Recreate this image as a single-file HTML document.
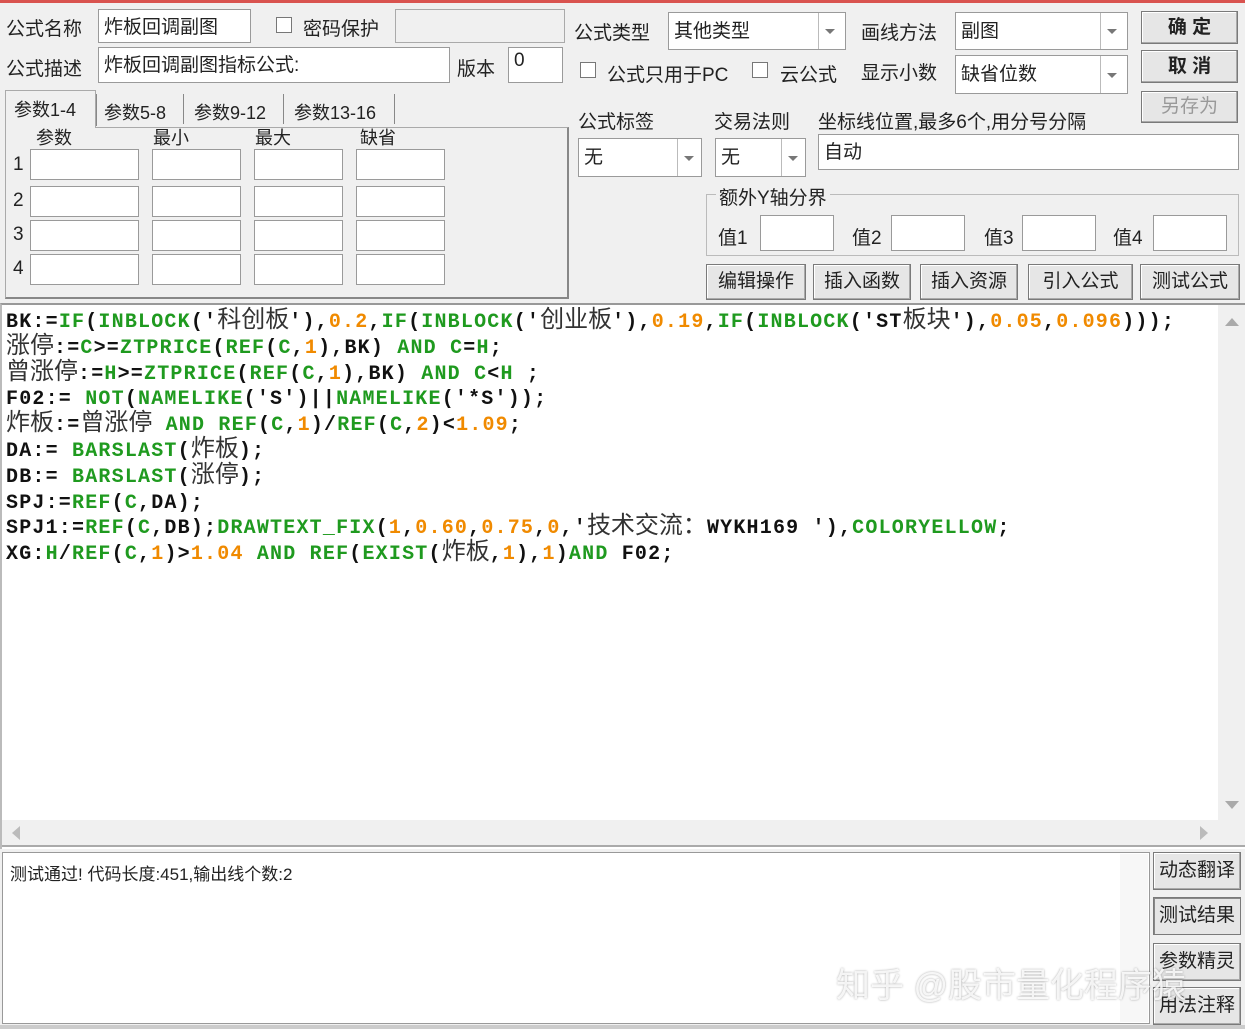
<!DOCTYPE html>
<html><head><meta charset="utf-8">
<style>
*{margin:0;padding:0;box-sizing:border-box}
body{width:1245px;height:1029px;background:#f0f0f0;position:relative;overflow:hidden;font-family:"Liberation Sans","Noto Sans CJK SC",sans-serif;font-size:19px;color:#222}
.a{position:absolute}
.lbl{position:absolute;white-space:nowrap;font-size:19px}
.in{position:absolute;background:#fff;border:1px solid #9a9a9a;padding:2px 5px;font-size:19px;white-space:nowrap}
.dis{position:absolute;background:#f0f0f0;border:1px solid #aaa}
.cb{position:absolute;width:16px;height:16px;border:1px solid #777;background:#fff}
.sel{position:absolute;background:#fff;border:1px solid #9a9a9a;font-size:19px;padding:3px 5px}
.sel .ar{position:absolute;right:0;top:0;bottom:0;width:22px;border-left:1px solid #bbb}
.sel .ar:after{content:"";position:absolute;left:6px;top:50%;margin-top:-2px;border-left:5px solid transparent;border-right:5px solid transparent;border-top:5px solid #777}
.btn{position:absolute;background:#e6e6e6;border:1px solid #7a7a7a;box-shadow:inset -1px -1px 0 #aaa,inset 1px 1px 0 #fff;text-align:center;font-size:19px;white-space:nowrap}
.code{position:absolute;left:6px;top:310px;font-family:"Liberation Mono",monospace;font-weight:bold;font-size:20px;letter-spacing:1.2px;line-height:25.8px;white-space:pre;color:#111}
.code .c{font-family:"Noto Sans CJK SC",sans-serif;font-weight:normal;font-size:24px;letter-spacing:0;color:#333;line-height:0}
.g{color:#1f9a1f}.o{color:#f08a00}
.tab{position:absolute;white-space:nowrap;font-size:18px}
</style></head><body>
<div class="a" style="left:0;top:0;width:1245px;height:3px;background:#d9534f"></div>

<div class="lbl" style="left:6px;top:14px">公式名称</div>
<div class="in" style="left:98px;top:9px;width:153px;height:34px">炸板回调副图</div>
<div class="cb" style="left:276px;top:17px"></div>
<div class="lbl" style="left:303px;top:14px">密码保护</div>
<div class="dis" style="left:395px;top:9px;width:170px;height:34px"></div>

<div class="lbl" style="left:6px;top:54px">公式描述</div>
<div class="in" style="left:98px;top:47px;width:352px;height:36px">炸板回调副图指标公式:</div>
<div class="lbl" style="left:457px;top:54px">版本</div>
<div class="in" style="left:508px;top:47px;width:55px;height:36px">0</div>

<!-- tabs -->
<div class="a" style="left:5px;top:90px;width:91px;height:38px;border:1px solid #aaa;border-bottom:none;background:#f0f0f0;z-index:2"></div>
<div class="tab" style="left:14px;top:96px;z-index:3">参数1-4</div>
<div class="tab" style="left:104px;top:99px">参数5-8</div>
<div class="a" style="left:183px;top:94px;width:1px;height:30px;background:#888"></div>
<div class="tab" style="left:194px;top:99px">参数9-12</div>
<div class="a" style="left:283px;top:94px;width:1px;height:30px;background:#888"></div>
<div class="tab" style="left:294px;top:99px">参数13-16</div>
<div class="a" style="left:394px;top:94px;width:1px;height:30px;background:#888"></div>
<div class="a" style="left:96px;top:94px;width:1px;height:32px;background:#888"></div>
<div class="a" style="left:5px;top:127px;width:564px;height:172px;border:1px solid #aaa;border-right:2px solid #888;border-bottom:2px solid #888"></div>
<div class="lbl" style="left:36px;top:124px;font-size:18px">参数</div>
<div class="lbl" style="left:153px;top:124px;font-size:18px">最小</div>
<div class="lbl" style="left:255px;top:124px;font-size:18px">最大</div>
<div class="lbl" style="left:360px;top:124px;font-size:18px">缺省</div>
<div class="lbl" style="left:13px;top:154px">1</div>
<div class="lbl" style="left:13px;top:190px">2</div>
<div class="lbl" style="left:13px;top:224px">3</div>
<div class="lbl" style="left:13px;top:258px">4</div>
<div class="in" style="left:30px;top:149px;width:109px;height:31px"></div>
<div class="in" style="left:152px;top:149px;width:89px;height:31px"></div>
<div class="in" style="left:254px;top:149px;width:89px;height:31px"></div>
<div class="in" style="left:356px;top:149px;width:89px;height:31px"></div>
<div class="in" style="left:30px;top:186px;width:109px;height:31px"></div>
<div class="in" style="left:152px;top:186px;width:89px;height:31px"></div>
<div class="in" style="left:254px;top:186px;width:89px;height:31px"></div>
<div class="in" style="left:356px;top:186px;width:89px;height:31px"></div>
<div class="in" style="left:30px;top:220px;width:109px;height:31px"></div>
<div class="in" style="left:152px;top:220px;width:89px;height:31px"></div>
<div class="in" style="left:254px;top:220px;width:89px;height:31px"></div>
<div class="in" style="left:356px;top:220px;width:89px;height:31px"></div>
<div class="in" style="left:30px;top:254px;width:109px;height:31px"></div>
<div class="in" style="left:152px;top:254px;width:89px;height:31px"></div>
<div class="in" style="left:254px;top:254px;width:89px;height:31px"></div>
<div class="in" style="left:356px;top:254px;width:89px;height:31px"></div>

<!-- right side -->
<div class="lbl" style="left:574px;top:18px">公式类型</div>
<div class="sel" style="left:668px;top:12px;width:178px;height:38px">其他类型<div class="ar" style="width:27px"></div></div>
<div class="lbl" style="left:861px;top:18px">画线方法</div>
<div class="sel" style="left:955px;top:12px;width:173px;height:38px">副图<div class="ar" style="width:27px"></div></div>
<div class="cb" style="left:580px;top:62px"></div>
<div class="lbl" style="left:607px;top:60px">公式只用于PC</div>
<div class="cb" style="left:752px;top:62px"></div>
<div class="lbl" style="left:780px;top:60px">云公式</div>
<div class="lbl" style="left:861px;top:58px">显示小数</div>
<div class="sel" style="left:955px;top:55px;width:173px;height:39px">缺省位数<div class="ar" style="width:27px"></div></div>
<div class="btn" style="left:1141px;top:11px;width:97px;height:33px;line-height:31px;font-weight:bold">确 定</div>
<div class="btn" style="left:1141px;top:50px;width:97px;height:33px;line-height:31px;font-weight:bold">取 消</div>
<div class="btn" style="left:1141px;top:91px;width:97px;height:32px;line-height:30px;color:#999">另存为</div>

<div class="lbl" style="left:578px;top:107px">公式标签</div>
<div class="lbl" style="left:714px;top:107px">交易法则</div>
<div class="lbl" style="left:818px;top:107px">坐标线位置,最多6个,用分号分隔</div>
<div class="sel" style="left:578px;top:138px;width:124px;height:39px">无<div class="ar" style="width:24px"></div></div>
<div class="sel" style="left:715px;top:138px;width:91px;height:39px">无<div class="ar" style="width:24px"></div></div>
<div class="in" style="left:818px;top:134px;width:421px;height:36px">自动</div>

<div class="a" style="left:706px;top:194px;width:533px;height:62px;border:1px solid #bbb"></div>
<div class="lbl" style="left:716px;top:183px;background:#f0f0f0;padding:0 3px">额外Y轴分界</div>
<div class="lbl" style="left:718px;top:223px">值1</div>
<div class="in" style="left:760px;top:215px;width:74px;height:36px"></div>
<div class="lbl" style="left:852px;top:223px">值2</div>
<div class="in" style="left:891px;top:215px;width:74px;height:36px"></div>
<div class="lbl" style="left:984px;top:223px">值3</div>
<div class="in" style="left:1022px;top:215px;width:74px;height:36px"></div>
<div class="lbl" style="left:1113px;top:223px">值4</div>
<div class="in" style="left:1153px;top:215px;width:74px;height:36px"></div>

<div class="btn" style="left:706px;top:264px;width:100px;height:36px;line-height:34px">编辑操作</div>
<div class="btn" style="left:813px;top:264px;width:98px;height:36px;line-height:34px">插入函数</div>
<div class="btn" style="left:920px;top:264px;width:98px;height:36px;line-height:34px">插入资源</div>
<div class="btn" style="left:1028px;top:264px;width:105px;height:36px;line-height:34px">引入公式</div>
<div class="btn" style="left:1140px;top:264px;width:100px;height:36px;line-height:34px">测试公式</div>

<!-- code editor -->
<div class="a" style="left:0;top:303px;width:1245px;height:546px;background:#fff;border-top:2px solid #999;border-left:2px solid #bbb"></div>
<div class="a" style="left:1218px;top:305px;width:27px;height:516px;background:#f0f0f0"></div>
<div class="a" style="left:1225px;top:318px;border-left:7px solid transparent;border-right:7px solid transparent;border-bottom:8px solid #aaa"></div>
<div class="a" style="left:1225px;top:801px;border-left:7px solid transparent;border-right:7px solid transparent;border-top:8px solid #aaa"></div>
<div class="a" style="left:2px;top:820px;width:1243px;height:27px;background:#f0f0f0;border-bottom:2px solid #aaa"></div>
<div class="a" style="left:12px;top:826px;border-top:7px solid transparent;border-bottom:7px solid transparent;border-right:8px solid #bbb"></div>
<div class="a" style="left:1200px;top:826px;border-top:7px solid transparent;border-bottom:7px solid transparent;border-left:8px solid #bbb"></div>

<div class="code">BK:=<span class="g">IF</span>(<span class="g">INBLOCK</span>('<span class="c">科创板</span>'),<span class="o">0.2</span>,<span class="g">IF</span>(<span class="g">INBLOCK</span>('<span class="c">创业板</span>'),<span class="o">0.19</span>,<span class="g">IF</span>(<span class="g">INBLOCK</span>('ST<span class="c">板块</span>'),<span class="o">0.05</span>,<span class="o">0.096</span>)));
<span class="c">涨停</span>:=<span class="g">C</span>&gt;=<span class="g">ZTPRICE</span>(<span class="g">REF</span>(<span class="g">C</span>,<span class="o">1</span>),BK) <span class="g">AND</span> <span class="g">C</span>=<span class="g">H</span>;
<span class="c">曾涨停</span>:=<span class="g">H</span>&gt;=<span class="g">ZTPRICE</span>(<span class="g">REF</span>(<span class="g">C</span>,<span class="o">1</span>),BK) <span class="g">AND</span> <span class="g">C</span>&lt;<span class="g">H</span> ;
F02:= <span class="g">NOT</span>(<span class="g">NAMELIKE</span>('S')||<span class="g">NAMELIKE</span>('*S'));
<span class="c">炸板</span>:=<span class="c">曾涨停</span> <span class="g">AND</span> <span class="g">REF</span>(<span class="g">C</span>,<span class="o">1</span>)/<span class="g">REF</span>(<span class="g">C</span>,<span class="o">2</span>)&lt;<span class="o">1.09</span>;
DA:= <span class="g">BARSLAST</span>(<span class="c">炸板</span>);
DB:= <span class="g">BARSLAST</span>(<span class="c">涨停</span>);
SPJ:=<span class="g">REF</span>(<span class="g">C</span>,DA);
SPJ1:=<span class="g">REF</span>(<span class="g">C</span>,DB);<span class="g">DRAWTEXT_FIX</span>(<span class="o">1</span>,<span class="o">0.60</span>,<span class="o">0.75</span>,<span class="o">0</span>,'<span class="c">技术交流：</span>WYKH169 '),<span class="g">COLORYELLOW</span>;
XG:<span class="g">H</span>/<span class="g">REF</span>(<span class="g">C</span>,<span class="o">1</span>)&gt;<span class="o">1.04</span> <span class="g">AND</span> <span class="g">REF</span>(<span class="g">EXIST</span>(<span class="c">炸板</span>,<span class="o">1</span>),<span class="o">1</span>)<span class="g">AND</span> F02;</div>

<!-- results -->
<div class="a" style="left:2px;top:852px;width:1148px;height:172px;background:#fff;border:1px solid #999"></div>
<div class="a" style="left:1120px;top:854px;width:28px;height:168px;background:#f7f7f7"></div>
<div class="lbl" style="left:10px;top:860px;font-size:17px">测试通过! 代码长度:451,输出线个数:2</div>
<div class="btn" style="left:1153px;top:852px;width:88px;height:38px;line-height:36px">动态翻译</div>
<div class="btn" style="left:1153px;top:897px;width:88px;height:38px;line-height:36px;box-shadow:inset 1px 1px 0 #888">测试结果</div>
<div class="btn" style="left:1153px;top:943px;width:88px;height:38px;line-height:36px">参数精灵</div>
<div class="btn" style="left:1153px;top:987px;width:88px;height:38px;line-height:36px">用法注释</div>
<div class="lbl" style="left:836px;top:958px;font-size:34px;color:rgba(255,255,255,0.85);text-shadow:0 0 2px rgba(0,0,0,0.35)">知乎 @股市量化程序猿</div>
<div class="a" style="left:0;top:1025px;width:1245px;height:4px;background:#ccc"></div>
</body></html>
